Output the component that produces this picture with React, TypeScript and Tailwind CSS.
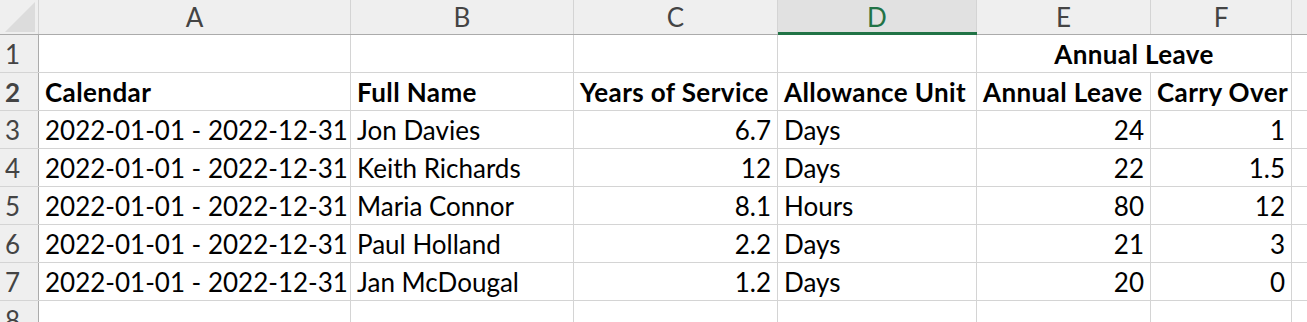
import React from 'react';

type Row = {
  calendar: string;
  name: string;
  years: string;
  unit: string;
  leave: string;
  carry: string;
};

const rows: Row[] = [
  { calendar: '2022-01-01 - 2022-12-31', name: 'Jon Davies', years: '6.7', unit: 'Days', leave: '24', carry: '1' },
  { calendar: '2022-01-01 - 2022-12-31', name: 'Keith Richards', years: '12', unit: 'Days', leave: '22', carry: '1.5' },
  { calendar: '2022-01-01 - 2022-12-31', name: 'Maria Connor', years: '8.1', unit: 'Hours', leave: '80', carry: '12' },
  { calendar: '2022-01-01 - 2022-12-31', name: 'Paul Holland', years: '2.2', unit: 'Days', leave: '21', carry: '3' },
  { calendar: '2022-01-01 - 2022-12-31', name: 'Jan McDougal', years: '1.2', unit: 'Days', leave: '20', carry: '0' },
];

const colHeaders = [
  { label: 'A', w: 'w-[312px]' },
  { label: 'B', w: 'w-[223px]' },
  { label: 'C', w: 'w-[204px]' },
  { label: 'D', w: 'w-[199px]', active: true },
  { label: 'E', w: 'w-[174px]' },
  { label: 'F', w: 'w-[141px]' },
];

const cell = 'h-full shrink-0 border-r border-[#d4d4d4] px-[6px] pt-[2px] leading-[35px] whitespace-nowrap overflow-hidden';

function RowNum({ n }: { n: number }) {
  return (
    <div className="h-full w-[39px] shrink-0 border-r border-[#ababab] bg-[#efefef] pl-[5px] pt-[1px] leading-[36px] text-[#444]">
      {n}
    </div>
  );
}

const App: React.FC = () => {
  return (
    <div
      className="h-[322px] w-[1307px] overflow-hidden bg-white text-[26px] text-black"
      style={{ fontFamily: 'Lato, "Open Sans", sans-serif' }}
    >
      {/* column headers */}
      <div className="flex h-[35px] border-b border-[#ababab] bg-[#efefef]">
        <div className="relative h-full w-[39px] shrink-0 border-r border-[#d4d4d4]">
          <svg className="absolute left-[5px] top-[2px]" width="30" height="30" viewBox="0 0 30 30">
            <polygon points="0,30 30,30 30,0" fill="#dcdcdc" />
          </svg>
        </div>
        {colHeaders.map((c) => (
          <div
            key={c.label}
            className={`${c.w} relative h-full shrink-0 border-r border-[#d4d4d4] text-center leading-[34px] ${
              c.active ? 'bg-[#e1e1e1] text-[#217346]' : 'text-[#444]'
            }`}
          >
            {c.label}
            {c.active ? <div className="absolute bottom-[-1px] left-0 right-[-1px] h-[3px] bg-[#217346]" /> : null}
          </div>
        ))}
        <div className="h-full flex-1" />
      </div>

      {/* row 1 */}
      <div className="flex h-[38px] border-b border-[#d4d4d4]">
        <RowNum n={1} />
        <div className={`${cell} w-[312px]`} />
        <div className={`${cell} w-[223px]`} />
        <div className={`${cell} w-[204px]`} />
        <div className={`${cell} w-[199px]`} />
        <div className={`${cell} w-[315px] text-center font-bold tracking-[0.4px]`}>Annual Leave</div>
        <div className="h-full flex-1" />
      </div>

      {/* row 2 */}
      <div className="flex h-[38px] border-b border-[#d4d4d4] font-bold tracking-[0.4px]">
        <RowNum n={2} />
        <div className={`${cell} w-[312px]`}>Calendar</div>
        <div className={`${cell} w-[223px]`}>Full Name</div>
        <div className={`${cell} w-[204px] px-[4px]`}>Years of Service</div>
        <div className={`${cell} w-[199px] px-[4px]`}>Allowance Unit</div>
        <div className={`${cell} w-[174px] px-[4px]`}>Annual Leave</div>
        <div className={`${cell} w-[141px] px-[4px]`}>Carry Over</div>
        <div className="h-full flex-1" />
      </div>

      {rows.map((r, i) => (
        <div key={i} className="flex h-[38px] border-b border-[#d4d4d4]">
          <RowNum n={i + 3} />
          <div className={`${cell} w-[312px]`}>{r.calendar}</div>
          <div className={`${cell} w-[223px]`}>{r.name}</div>
          <div className={`${cell} w-[204px] text-right`}>{r.years}</div>
          <div className={`${cell} w-[199px]`}>{r.unit}</div>
          <div className={`${cell} w-[174px] text-right`}>{r.leave}</div>
          <div className={`${cell} w-[141px] text-right`}>{r.carry}</div>
          <div className="h-full flex-1" />
        </div>
      ))}

      {/* row 8 */}
      <div className="flex h-[38px]">
        <RowNum n={8} />
        <div className={`${cell} w-[312px]`} />
        <div className={`${cell} w-[223px]`} />
        <div className={`${cell} w-[204px]`} />
        <div className={`${cell} w-[199px]`} />
        <div className={`${cell} w-[174px]`} />
        <div className={`${cell} w-[141px]`} />
        <div className="h-full flex-1" />
      </div>
    </div>
  );
};

export default App;
